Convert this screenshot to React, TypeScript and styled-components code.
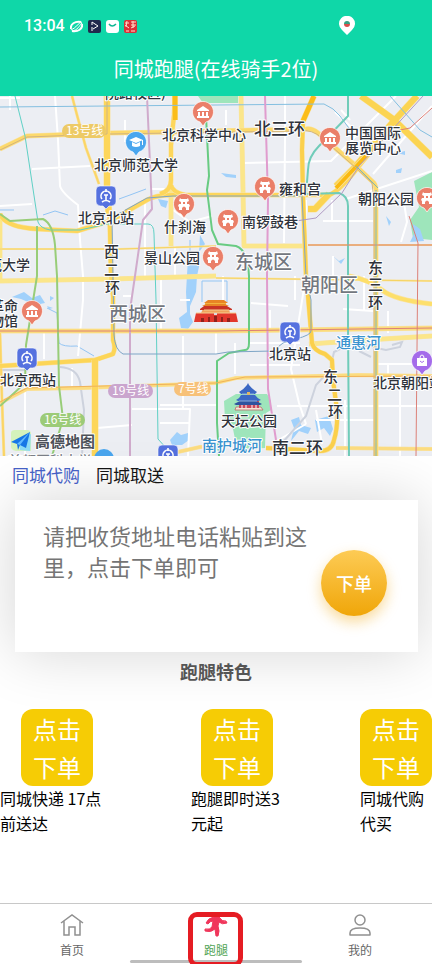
import React from "react";
import styled, { createGlobalStyle } from "styled-components";

const GlobalStyle = createGlobalStyle`
  *, *::before, *::after { box-sizing: border-box; }
  body {
    margin: 0;
    background: #fff;
    color: #111;
    font-family: "Noto Sans CJK SC", "Noto Sans", sans-serif;
  }
  button, textarea { font-family: inherit; margin: 0; border: 0; }
`;

const Page = styled.div`
  display: flex;
  flex-direction: column;
  min-height: 100vh;
  overflow: hidden;
`;

const Header = styled.header`
  background: #0fd7a8;
  color: #fff;
  padding: 12px 24px;
  height: 96px;
`;

const StatusBar = styled.div`
  display: flex;
  align-items: center;
  justify-content: space-between;
  height: 28px;
  padding-right: 53px;
`;

const StatusGroup = styled.div`
  display: flex;
  align-items: center;
  gap: 5px;
`;

const Clock = styled.time`
  font: 500 16px/20px Roboto, sans-serif;
`;

const Title = styled.h1`
  margin: 14px 0 0;
  font-size: 20px;
  line-height: 30px;
  font-weight: 400;
  text-align: center;
`;

const MapView = styled.svg`
  display: block;
  width: 100%;
  height: 360px;
  background: #eceef3;
  text {
    fill: #2f333b;
    font-size: 14px;
    font-weight: 500;
    paint-order: stroke;
    stroke: #fff;
    stroke-width: 2px;
    stroke-linejoin: round;
  }
  text.ring { font-size: 17px; }
  text.ring.vertical { font-size: 15px; }
  text.district { font-size: 19px; fill: #737780; }
  text.water { fill: #3a93cf; font-size: 15px; }
  text.line { fill: #fff; stroke: none; font-size: 12px; font-weight: 400; }
  text.brand { fill: #4c5159; font-size: 15px; font-weight: 700; }
  text.faded { fill: #7b7f88; }
`;

const Main = styled.main`
  flex: 1;
`;

const Tabs = styled.div`
  display: flex;
  gap: 16px;
  padding: 6px 12px 12px;
`;

const Tab = styled.button<{ $active?: boolean }>`
  padding: 0;
  background: none;
  font-size: 17px;
  line-height: 26px;
  color: ${(p) => (p.$active ? "#4460c4" : "#151515")};
`;

const OrderCard = styled.form`
  display: flex;
  align-items: center;
  justify-content: space-between;
  margin: 0 14px 0 15px;
  height: 152px;
  padding: 20px 31px 24px 28px;
  background: #fff;
  box-shadow: 0 0 60px rgba(0, 0, 0, 0.17);
`;

const AddressInput = styled.textarea`
  width: 266px;
  height: 108px;
  padding: 0;
  resize: none;
  outline: none;
  overflow: hidden;
  background: none;
  font-size: 22px;
  line-height: 31px;
  &::placeholder { color: #757575; opacity: 1; }
`;

const OrderButton = styled.button`
  flex: none;
  width: 66px;
  height: 66px;
  margin-top: 17px;
  padding: 0;
  border-radius: 50%;
  color: #fff;
  font-size: 18px;
  font-weight: 500;
  background: linear-gradient(#fdcb55, #f0a609);
  box-shadow: 0 6px 14px rgba(240, 166, 9, 0.4);
`;

const SectionTitle = styled.h2`
  position: relative;
  margin: 6px 0 24px;
  font-size: 18px;
  line-height: 27px;
  font-weight: 700;
  text-align: center;
  color: #555;
`;

const Features = styled.ul`
  position: relative;
  display: flex;
  justify-content: space-between;
  list-style: none;
  margin: 0;
  padding: 0;
`;

const Feature = styled.li<{ $width: number }>`
  display: flex;
  flex-direction: column;
  align-items: center;
  width: ${(p) => p.$width}px;
`;

const Tile = styled.button`
  width: 72px;
  height: 77px;
  padding: 0 12px;
  border-radius: 12px;
  background: #f6cc05;
  color: #fff;
  font-size: 24px;
  line-height: 38px;
`;

const Caption = styled.p`
  margin: 0;
  width: 100%;
  font-size: 16px;
  line-height: 25px;
  color: #000;
`;

const NavBar = styled.nav`
  position: relative;
  display: grid;
  grid-template-columns: repeat(3, 1fr);
  height: 61px;
  border-top: 1px solid #c8c8c8;
  background: #fff;
`;

const NavItem = styled.a<{ $active?: boolean }>`
  display: flex;
  flex-direction: column;
  align-items: center;
  gap: 3px;
  padding-top: 9px;
  text-decoration: none;
  font-size: 12px;
  line-height: 18px;
  color: ${(p) => (p.$active ? "#4fa352" : "#666")};
  svg { display: block; }
`;

const HomeIndicator = styled.div`
  position: absolute;
  bottom: 1px;
  left: 30%;
  right: 30%;
  height: 3px;
  border-radius: 2px;
  background: #bdbdbd;
`;

const Highlight = styled.div`
  position: absolute;
  top: 8px;
  left: calc(50% - 28px);
  width: 55px;
  height: 55px;
  border: 5px solid #e51c23;
  border-radius: 9px;
  pointer-events: none;
`;

type Line = { d: string; c: string; w: number };

const minorRoads = [
  "M55 96L58 140 60 186Q62 193 78 205L80 240 83 276 83 300 78 356",
  "M32 169L90 166M0 206L32 204M0 98L20 98M125 120L125 142M10 96V110",
  "M285 96V140L284 243M243 163L331 161 339 153 396 96M432 106L373 174",
  "M323 221H373M346 199L432 171M403 196L407 222 401 242M306 200V246M332 200V221",
  "M25 383V456M132 409H190L188 456M160 423H190M97 428L132 425M183 336V409M44 333V359M72 368V389",
  "M364 276V310M343 309L373 311M376 364H412M277 406H432M306 276L291 369 299 403 306 424M251 303L288 306",
  "M173 210L190 222 212 216M145 200V276M161 333V276M216 331V354M316 410L322 444M388 311V333M388 364V378",
  "M333 256V276M216 405H160M270 310V331M335 112L365 140M341 110L350 120M226 110V125M150 189H172M306 424L275 442M123 296H132M175 246V276M180 300H190",
  "M295 276V300M223 276V300M235 343V374M250 343H300M250 365H300M400 378V456M316 420H375M345 400V456",
].join("");

const roads: Line[] = [
  { d: "M0 281L111 279 216 276M171 190V246M241 96L243 190 244 246 304 246M309 344L383 339 432 336M0 213V281", c: "#fbe68a", w: 4 },
  { d: "M0 249H120L216 246M216 278L432 281M308 245H432", c: "#f6d463", w: 1 },
  { d: "M0 403L27 389 83 388 216 383 236 378 359 375 432 376M160 456L200 447 216 446M336 448L432 449", c: "#fcdc80", w: 3 },
  { d: "M0 331H216L432 328", c: "#fbdc7d", w: 4 },
  { d: "M349 276Q370 280 382 290T432 304", c: "#fddf6b", w: 4 },
  { d: "M0 149L27 136 110 133 170 132 216 131 306 129 Q312 128 318 133L356 166 374 183Q377 187 376 200V456", c: "#fcd96c", w: 4 },
  { d: "M0 333L2 400 4 456M72 96L77 115 86 148 99 184", c: "#fbd566", w: 2 },
  { d: "M0 366L95 360 113 354Q116 348 113 340V296L111 276 109 190", c: "#fcd557", w: 4 },
  { d: "M107 96V190L109 216M95 360V456", c: "#fdd65a", w: 6 },
  { d: "M0 214Q5 227 37 229L77 231Q90 227 110 221L147 200Q155 195 173 195H329Q340 191 359 166L416 96", c: "#fdd65b", w: 4 },
  { d: "M175 96L174 115 171 145V180Q171 191 160 194M171 185Q172 192 185 195", c: "#fdd65b", w: 4 },
  { d: "M361 96L393 119 432 157M336 186L356 166 393 122 417 96M308 209H315L329 194", c: "#fbd452", w: 6 },
  { d: "M314 96L303 121M175 96V120", c: "#fbbd19", w: 5 },
  { d: "M303 121L302 150 303 196 306 276 308 296 312 343Q314 351 325 354L332 360 333 380 337 410Q338 427 334 440 332 451 320 451L266 448", c: "#fbd04c", w: 4 },
  { d: "M336 188L366 156", c: "#fab910", w: 4 },
];

const subways: Line[] = [
  { d: "M15 96L25 136 38 222Q40 228 50 230L80 230 107 224H148Q154 224 154 234L156 300 158 439 167 449", c: "#5fd0c5", w: 1 },
  { d: "M0 107L216 105 324 104Q334 108 340 116L354 135M390 96L420 130 432 137", c: "#84bfe0", w: 1 },
  { d: "M348 96V116L319 146Q308 157 308 170L306 194 339 193Q348 196 348 206V325L349 456", c: "#70ccb9", w: 2 },
  { d: "M147 96L152 209 143 220 135 276 130 310V456", c: "#d0abcc", w: 2 },
  { d: "M265 96L268 200 267 276 268 389 276 440", c: "#e09cce", w: 2 },
  { d: "M206 116L209 176 207 190 212 230 218 244 236 246Q248 250 249 276V343Q249 350 245 350L229 353 217 361V423L219 456", c: "#68cb82", w: 2 },
  { d: "M0 214L10 221 43 219Q53 224 55 245L57 276 59 386 63 419 52 456M37 226V276L26 345 25 383 0 406", c: "#98cd78", w: 2 },
  { d: "M423 96L359 166 342 193 316 218 289 222 269 220", c: "#b09bc3", w: 1 },
  { d: "M0 150L27 137 107 134 107 96M110 134L300 131Q312 129 322 138L356 168 372 183 374 200V456", c: "#d2b47f", w: 1 },
  { d: "M111 218L147 198 173 196H302L306 276 311 300V331Q311 335 296 339L283 343 273 351 228 352 216 354H123Q115 350 114 335L112 218", c: "#7ea5c6", w: 1 },
  { d: "M0 331H216L432 328M308 245H432M432 108L410 128 400 130M409 216L418 243 416 456", c: "#dc8078", w: 1 },
  { d: "M376 190V456M356 166L378 188", c: "#7db4b6", w: 1 },
  { d: "M0 402L27 388 216 383 245 377 432 376", c: "#f0b25a", w: 1 },
];

const Pin = ({ x, y, kind }: { x: number; y: number; kind: "museum" | "gate" | "school" | "shop" }) => (
  <g transform={`translate(${x} ${y})`}>
    <path
      d="M0 14L-3 10A10.500 10.500 0 1 1 3 10Z"
      fill={kind === "school" ? "#4aa6ee" : kind === "shop" ? "#a46bea" : "#ea7f69"}
      stroke="#fff"
      strokeWidth=".7"
    />
    {kind === "museum" && <path d="M-6-2L0-6 6-2V-1H-6ZM-5 0H-3V4H-5ZM-1 0H1V4H-1ZM3 0H5V4H3ZM-6 4H6V6H-6Z" fill="#fff" />}
    {kind === "gate" && (
      <path d="M-4-6L-3-5H3L4-6 5-3 3-2V0H5L6 2 5 3V6H2V4Q0 1-2 4V6H-5V3L-6 2-5 0H-3V-2L-5-3ZM-1-2V0H1V-2Z" fill="#fff" fillRule="evenodd" />
    )}
    {kind === "school" && <path d="M-7-2L0-5 7-2 0 1ZM-4 0L0 2 4 0V4Q0 6-4 4ZM6-2H7V3H6Z" fill="#fff" />}
    {kind === "shop" && (
      <>
        <path d="M-5-3H5V5H-5Z" fill="#fff" />
        <path d="M-2-3Q-2-6 0-6T2-3" fill="none" stroke="#fff" />
        <path d="M-2 0Q0 3 2 0" fill="none" stroke="#a46bea" />
      </>
    )}
  </g>
);

const Station = ({ x, y }: { x: number; y: number }) => (
  <g transform={`translate(${x} ${y})`}>
    <path d="M-6-10H6Q10-10 10-6V6Q10 9 6 10H3L0 13-3 10H-6Q-10 9-10 6V-6Q-10-10-6-10Z" fill="#5571df" stroke="#fff" strokeWidth=".6" />
    <path d="M-4 3A5 5 0 1 1 4 3M0-7V-4M-2-1H2M0-1V4M-4 6Q0 3 4 6" fill="none" stroke="#fff" strokeWidth="1.600" />
  </g>
);

const CityMap = () => (
  <MapView viewBox="0 96 432 360" preserveAspectRatio="xMidYMid slice" role="img" aria-label="北京地图">
    <g fill="#9ee5bb">
      <path d="M198 96H238V103H203ZM414 181L432 172V240L413 238 410 220 419 207Z" />
      <path d="M224 401L236 394H267L271 401V410L266 413 265 448 237 449 233 429 225 420Z" />
    </g>
    <g fill="#a1d1fb">
      <path d="M158 199L168 201 166 208 161 206ZM200 235L205 244 199 252ZM188 258L200 262 197 276 196 292 190 306V314L193 322 188 329 181 328 179 318 187 312 186 292Z" />
      <path d="M12 297L24 292 32 298 40 295 45 303 35 305 21 299ZM50 296L54 298 50 301ZM47 306L53 308 49 309ZM170 440L177 432 181 435 188 433 189 440 182 445 172 445Z" />
      <path d="M291 420L299 417 301 425 311 428 308 434 299 431 291 441 294 428ZM315 420L329 416 333 429 330 436 324 428 317 432ZM413 224L420 229 424 241 410 242 414 234Z" />
      <path d="M221 173L236 175V178L226 177ZM396 170L402 168 401 173H396ZM386 216L391 222 389 226ZM333 256L339 261 345 258 341 264ZM397 153L405 151V155Z" />
    </g>
    <path d="M119 199L130 195 146 189M43 215L55 211 68 215M47 308L57 313 59 343Q63 347 77 346L94 356M0 210H14M190 262V240M202 302V281H227V302" fill="none" stroke="#93c5f4" />
    <path d={minorRoads} fill="none" stroke="#fff" strokeWidth="2" strokeLinejoin="round" />
    <path d="M0 370H27M60 367Q77 368 80 382L84 410 82 456M283 442L306 416 316 385 330 370 334 352 352 343 386 350 400 347 402 342 392 345M359 351L371 357" fill="none" stroke="#cdd2dd" strokeWidth="2" />
    {roads.map((r) => (
      <g key={r.d} fill="none" strokeLinejoin="round">
        <path d={r.d} stroke="#f9e3a3" strokeWidth={r.w + 1} />
        <path d={r.d} stroke={r.c} strokeWidth={r.w} />
      </g>
    ))}
    {subways.map((s) => (
      <path key={s.d} d={s.d} fill="none" stroke={s.c} strokeWidth={s.w} strokeLinejoin="round" />
    ))}

    <rect x="62" y="124" width="44" height="14" rx="7" fill="#edca66" />
    <text className="line" x="66" y="135">13号线</text>
    <rect x="108" y="384" width="45" height="14" rx="7" fill="#caa5ce" />
    <text className="line" x="112" y="395">19号线</text>
    <rect x="174" y="382" width="37" height="14" rx="7" fill="#f7c179" />
    <text className="line" x="178" y="393">7号线</text>
    <rect x="40" y="413" width="45" height="14" rx="7" fill="#9ccb78" />
    <text className="line" x="44" y="424">16号线</text>

    <g>
      <path d="M196 313H236L238 322H194Z" fill="#e2382c" />
      <path d="M203 309H229L230 313H201Z" fill="#f0a35c" />
      <path d="M200 309L204 306H227L232 309V310H200Z" fill="#c93425" />
      <path d="M205 303H226V306H205Z" fill="#f3b33d" />
      <path d="M202 306L206 304H225L229 306ZM204 303L208 300H224L228 303Z" fill="#e88424" />
      <path d="M196 313H236M204 310H229" stroke="#f7cf91" />
      <path d="M214 313H217V315H214Z" fill="#ddd" />
      <path d="M201 322V318H204V322M208 322V317H210V322M214 322V316H217V322M221 322V317H223V322M227 322V318H230V322" fill="#8f221c" />
    </g>
    <g>
      <path d="M236 407H261L263 410H235Z" fill="#f3e5d6" stroke="#b85b60" strokeWidth=".7" />
      <path d="M239 401H259V408H239Z" fill="#c9485b" />
      <path d="M242 402V408M246 402V408M252 402V408M256 402V408" stroke="#fff" />
      <path d="M247 385L248 383 249 385Q252 389 257 392L255 394H241L239 392Q244 389 247 385ZM241 395H255Q257 398 261 400L258 401H238L236 400Q240 398 241 395Z" fill="#3b68c4" />
      <path d="M240 401H256L262 404 260 405H236L234 404Z" fill="#2e539f" />
      <path d="M242 394H254M239 401H257" stroke="#8daedc" />
      <path d="M247 392H250V395H247Z" fill="#e0b765" />
    </g>

    <Pin x={203} y={112} kind="museum" />
    <Pin x={330} y={138} kind="museum" />
    <Pin x={32} y={311} kind="museum" />
    <Pin x={136} y={142} kind="school" />
    <Pin x={184} y={204} kind="gate" />
    <Pin x={265} y={187} kind="gate" />
    <Pin x={228} y={220} kind="gate" />
    <Pin x={213} y={257} kind="gate" />
    <Pin x={427} y={198} kind="gate" />
    <Pin x={422} y={361} kind="shop" />
    <Station x={106} y={196} />
    <Station x={27} y={358} />
    <Station x={290} y={332} />
    <Station x={168} y={455} />
    <circle cx="104" cy="459" r="10" fill="#4aa6ee" />

    <text x="105" y="98">院路校区)</text>
    <text x="162" y="140">北京科学中心</text>
    <text x="345" y="138">中国国际</text>
    <text x="345" y="153">展览中心</text>
    <text x="94" y="170">北京师范大学</text>
    <text x="279" y="194">雍和宫</text>
    <text x="358" y="204">朝阳公园</text>
    <text x="78" y="223">北京北站</text>
    <text x="164" y="232">什刹海</text>
    <text x="242" y="227">南锣鼓巷</text>
    <text x="144" y="263">景山公园</text>
    <text x="-12" y="270">范大学</text>
    <text x="-10" y="311">革命</text>
    <text x="-10" y="326">物馆</text>
    <text x="0" y="385">北京西站</text>
    <text x="269" y="359">北京站</text>
    <text x="373" y="388">北京朝阳站</text>
    <text x="221" y="426">天坛公园</text>
    <text className="faded" x="8" y="466">首都医科大学</text>
    <text className="ring" x="254" y="135">北三环</text>
    <text className="ring" x="272" y="454">南二环</text>
    <text className="ring vertical" x="104" y="257">西</text>
    <text className="ring vertical" x="104" y="275">二</text>
    <text className="ring vertical" x="105" y="293">环</text>
    <text className="ring vertical" x="368" y="273">东</text>
    <text className="ring vertical" x="368" y="290">三</text>
    <text className="ring vertical" x="368" y="308">环</text>
    <text className="ring vertical" x="323" y="382">东</text>
    <text className="ring vertical" x="327" y="400">二</text>
    <text className="ring vertical" x="328" y="417">环</text>
    <text className="district" x="235" y="269">东城区</text>
    <text className="district" x="301" y="292">朝阳区</text>
    <text className="district" x="109" y="321">西城区</text>
    <text className="water" x="336" y="348">通惠河</text>
    <text className="water" x="202" y="451">南护城河</text>

    <path d="M11 433Q11 430 15 430H27Q31 430 31 434V451H16Q10 450 11 445Z" fill="#d5f2bb" />
    <path d="M20 438L31 434 30 451 20 450Z" fill="#8ddcf5" />
    <path d="M11 442L30 432 26 448 20 445 18 450 17 444Z" fill="#1677e6" />
    <path d="M17 444L30 432 20 445Z" fill="#61b9ff" />
    <text className="brand" x="35" y="447">高德地图</text>
  </MapView>
);

const StatusIcons = () => (
  <>
    <svg width="13" height="13" viewBox="0 0 13 13" fill="none" stroke="#fff">
      <path d="M1 9C0 4 5 1 11 2" strokeWidth="2" />
      <path d="M12 4C13 9 8 12 2 11" strokeWidth="2" />
      <path d="M1 10C6 8 8 3 12 2M2 11C8 10 9 6 12 3" />
    </svg>
    <svg width="13" height="13" viewBox="0 0 13 13">
      <rect width="13" height="13" rx="2" fill="#20284d" />
      <path d="M4 5V2L10 6 5 9M4 7V11" fill="none" stroke="#fff" />
    </svg>
    <svg width="13" height="13" viewBox="0 0 13 13">
      <rect width="13" height="13" rx="3" fill="#fff" />
      <path d="M3 4Q6 8 10 4" fill="none" stroke="#0fb894" strokeWidth="1.500" />
    </svg>
    <svg width="13" height="13" viewBox="0 0 13 13">
      <rect width="13" height="13" rx="2" fill="#de3038" />
      <path d="M1 3H5M3 1L2 7M1 5L5 8M7 2H12M9 1V8M7 5H12M7 8L11 6M2 11H5M7 11H11" stroke="#ffe0cb" />
    </svg>
  </>
);

const features = [
  { text: "同城快递 17点前送达", width: 114 },
  { text: "跑腿即时送3元起", width: 92 },
  { text: "同城代购代买", width: 72 },
];

export default function App() {
  return (
    <Page>
      <GlobalStyle />
      <Header>
        <StatusBar>
          <StatusGroup>
            <Clock>13:04</Clock>
            <StatusIcons />
          </StatusGroup>
          <svg width="16" height="20" viewBox="0 0 16 20" aria-hidden="true">
            <path d="M8 19L3 14A8 8 0 1 1 13 14Z" fill="#fff" />
            <path d="M5 8A3 3 0 0 1 11 8Z" fill="#369f82" />
            <path d="M5 8A3 3 0 0 0 11 8Z" fill="#d94d4a" />
          </svg>
        </StatusBar>
        <Title>同城跑腿(在线骑手2位)</Title>
      </Header>
      <CityMap />
      <Main>
        <Tabs>
          <Tab type="button" $active>同城代购</Tab>
          <Tab type="button">同城取送</Tab>
        </Tabs>
        <OrderCard onSubmit={(e) => e.preventDefault()}>
          <AddressInput aria-label="收货地址电话" placeholder="请把收货地址电话粘贴到这里，点击下单即可" />
          <OrderButton type="submit">下单</OrderButton>
        </OrderCard>
        <SectionTitle>跑腿特色</SectionTitle>
        <Features>
          {features.map((f) => (
            <Feature key={f.text} $width={f.width}>
              <Tile type="button">点击下单</Tile>
              <Caption>{f.text}</Caption>
            </Feature>
          ))}
        </Features>
      </Main>
      <NavBar>
        <NavItem href="#home">
          <svg width="24" height="25" viewBox="0 0 24 25" fill="none" stroke="#909090" strokeWidth="1.500">
            <path d="M1 10L12 2 23 10M4 8V22H9V14H15V22H20V8" />
          </svg>
          首页
        </NavItem>
        <NavItem href="#errand" $active>
          <svg width="24" height="25" viewBox="0 0 24 25" fill="#f0365b" stroke="#f0365b" strokeLinejoin="round">
            <path d="M10 4Q4 5 2 10L4 11Q6 8 9 8L8 14Q6 17 1 16V18Q7 20 11 16L12 23H14Q16 18 14 13L15 9Q18 12 23 10L22 8Q18 9 15 4Z" />
          </svg>
          跑腿
        </NavItem>
        <NavItem href="#mine">
          <svg width="24" height="25" viewBox="0 0 24 25" fill="none" stroke="#909090" strokeWidth="1.500">
            <circle cx="12" cy="7" r="5" />
            <path d="M2 22V20Q2 15 12 15T22 20V22Z" strokeLinejoin="round" />
          </svg>
          我的
        </NavItem>
        <HomeIndicator />
        <Highlight />
      </NavBar>
    </Page>
  );
}
